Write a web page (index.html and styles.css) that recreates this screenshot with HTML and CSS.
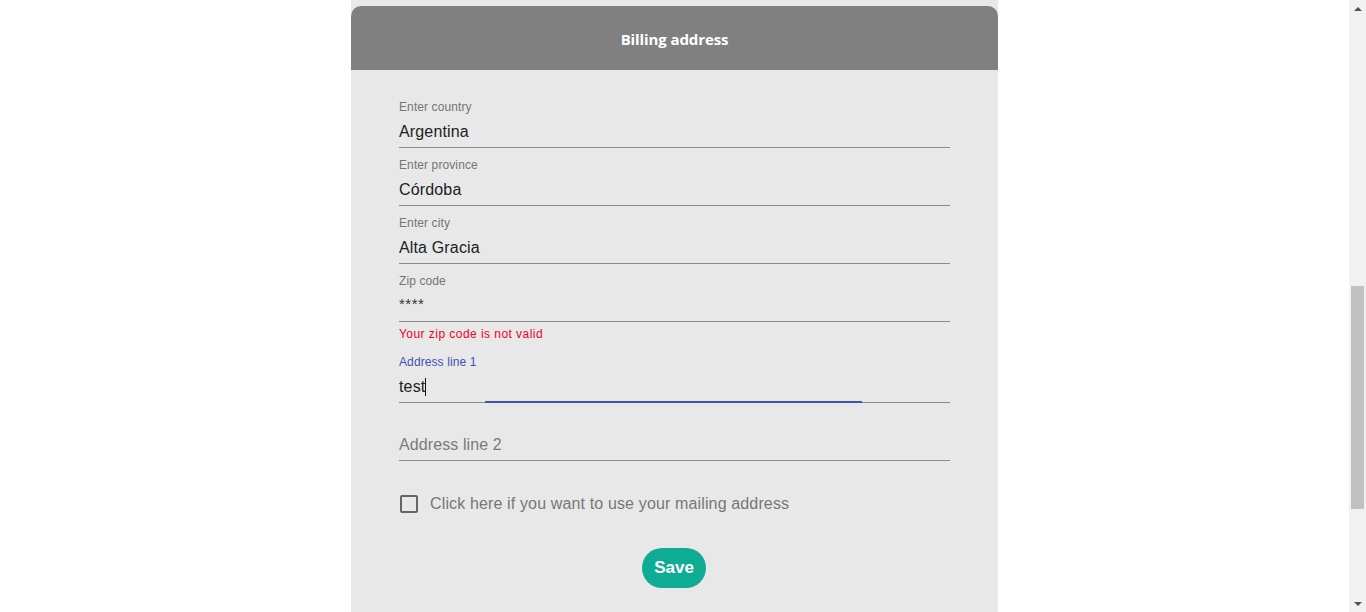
FILE: index.html
```html
<!DOCTYPE html>
<html lang="en">
<head>
<meta charset="utf-8">
<title>Billing address</title>
<link rel="stylesheet" href="styles.css">
</head>
<body>
<div class="page">
  <div class="panel">
    <section class="card">
      <header class="card-header">Billing address</header>
      <form class="form">
        <div class="field">
          <label class="label">Enter country</label>
          <div class="input"><span class="value">Argentina</span></div>
        </div>
        <div class="field">
          <label class="label">Enter province</label>
          <div class="input"><span class="value">Córdoba</span></div>
        </div>
        <div class="field">
          <label class="label">Enter city</label>
          <div class="input"><span class="value">Alta Gracia</span></div>
        </div>
        <div class="field field-error">
          <label class="label">Zip code</label>
          <div class="input"><span class="value mask">****</span></div>
          <div class="error">Your zip code is not valid</div>
        </div>
        <div class="field field-focus">
          <label class="label label-focus">Address line 1</label>
          <div class="input"><span class="value">test</span><span class="caret"></span><span class="focus-bar"></span></div>
        </div>
        <div class="field">
          <label class="label"></label>
          <div class="input"><span class="placeholder">Address line 2</span></div>
        </div>
        <div class="check-row">
          <span class="checkbox"></span>
          <span class="check-label">Click here if you want to use your mailing address</span>
        </div>
        <div class="actions">
          <button type="button" class="save">Save</button>
        </div>
      </form>
    </section>
  </div>
</div>
<div class="scrollbar">
  <div class="arrow arrow-up"></div>
  <div class="track"><div class="thumb"></div></div>
  <div class="arrow arrow-down"></div>
</div>
</body>
</html>
```

FILE: styles.css
```css
html, body {
  margin: 0;
  padding: 0;
  height: 612px;
  overflow: hidden;
}
body {
  display: flex;
  background: #ffffff;
  font-family: "Liberation Sans", Arial, sans-serif;
}
.page {
  flex: 1;
  display: flex;
  justify-content: center;
}
.panel {
  width: 647px;
  height: 612px;
  background: #e8e8e8;
  padding-top: 6px;
  box-sizing: border-box;
}
.card {
  background: #e8e8e8;
}
.card-header {
  height: 64px;
  background: #808080;
  border-radius: 10px 10px 0 0;
  color: #ffffff;
  font-family: "Open Sans", sans-serif;
  font-weight: 700;
  font-size: 15px;
  display: flex;
  align-items: center;
  justify-content: center;
  letter-spacing: -0.1px;
  padding-top: 2px;
  box-sizing: border-box;
}
.form {
  padding: 30px 48px 0 48px;
  display: flex;
  flex-direction: column;
}
.field {
  margin-bottom: 10px;
}
.label {
  display: block;
  height: 14px;
  font-size: 12px;
  line-height: 14px;
  color: #757575;
  letter-spacing: 0.1px;
}
.label-focus {
  color: #3f51b5;
}
.input {
  position: relative;
  height: 33px;
  line-height: 33px;
  border-bottom: 1px solid #8a8a8a;
  font-size: 16px;
  display: flex;
  align-items: center;
  padding-top: 2px;
  box-sizing: border-box;
  height: 34px;
}
.value {
  color: #212121;
  letter-spacing: 0.15px;
}
.mask {
  font-size: 15px;
  letter-spacing: 0.5px;
  position: relative;
  top: -2px;
  color: #333;
}
.placeholder {
  color: #7a7a7a;
  letter-spacing: 0.1px;
}
.caret {
  display: inline-block;
  width: 1px;
  height: 18px;
  background: #111;
}
.focus-bar {
  position: absolute;
  left: 86px;
  width: 377px;
  bottom: -1px;
  height: 2px;
  background: #3f51b5;
}
.error {
  font-size: 12px;
  line-height: 14px;
  height: 14px;
  padding-top: 4px;
  padding-bottom: 5px;
  color: #f2001c;
  letter-spacing: 0.45px;
  position: relative;
  top: 1px;
}
.check-row {
  margin-top: 21px;
  height: 24px;
  display: flex;
  align-items: center;
}
.checkbox {
  width: 14px;
  height: 14px;
  border: 2px solid #666666;
  border-radius: 2px;
  margin-left: 1px;
}
.check-label {
  margin-left: 12px;
  font-size: 16px;
  color: #777777;
  letter-spacing: 0.14px;
}
.actions {
  margin-top: 32px;
  display: flex;
  justify-content: center;
}
.save {
  height: 40px;
  width: 64px;
  border: none;
  border-radius: 20px;
  background: #0dac93;
  color: #ffffff;
  font-family: "Liberation Sans", Arial, sans-serif;
  font-weight: 700;
  font-size: 17px;
  padding: 0;
  margin-right: 1px;
}
.scrollbar {
  width: 17px;
  height: 612px;
  background: #f1f1f1;
  display: flex;
  flex-direction: column;
}
.arrow {
  height: 17px;
  display: flex;
  align-items: center;
  justify-content: center;
}
.arrow-up::before {
  content: "";
  border-left: 4px solid transparent;
  border-right: 4px solid transparent;
  border-bottom: 4px solid #505050;
}
.arrow-down::before {
  content: "";
  border-left: 4px solid transparent;
  border-right: 4px solid transparent;
  border-top: 4px solid #505050;
}
.track {
  flex: 1;
  padding-top: 269px;
}
.thumb {
  margin: 0 2px;
  height: 223px;
  background: #c1c1c1;
}
```
